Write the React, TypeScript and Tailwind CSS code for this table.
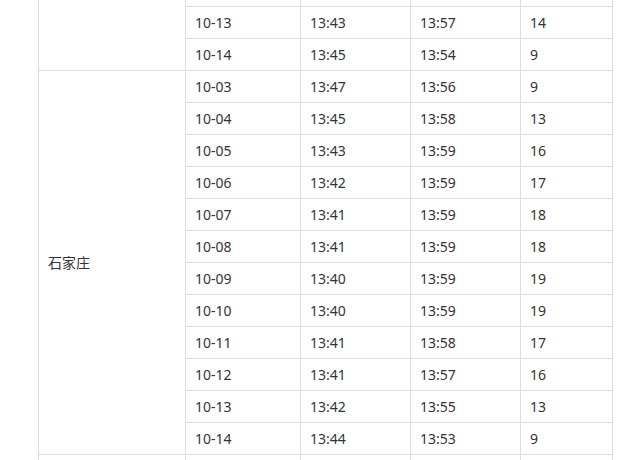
import React from 'react';

type Row = { date: string; rise: string; set: string; mins: string };

// rows cut off at the top and bottom edges show no text in the shot
const blank: Row = { date: '', rise: '', set: '', mins: '' };

const prevRows: Row[] = [
  blank,
  { date: '10-13', rise: '13:43', set: '13:57', mins: '14' },
  { date: '10-14', rise: '13:45', set: '13:54', mins: '9' },
];

const sjzRows: Row[] = [
  { date: '10-03', rise: '13:47', set: '13:56', mins: '9' },
  { date: '10-04', rise: '13:45', set: '13:58', mins: '13' },
  { date: '10-05', rise: '13:43', set: '13:59', mins: '16' },
  { date: '10-06', rise: '13:42', set: '13:59', mins: '17' },
  { date: '10-07', rise: '13:41', set: '13:59', mins: '18' },
  { date: '10-08', rise: '13:41', set: '13:59', mins: '18' },
  { date: '10-09', rise: '13:40', set: '13:59', mins: '19' },
  { date: '10-10', rise: '13:40', set: '13:59', mins: '19' },
  { date: '10-11', rise: '13:41', set: '13:58', mins: '17' },
  { date: '10-12', rise: '13:41', set: '13:57', mins: '16' },
  { date: '10-13', rise: '13:42', set: '13:55', mins: '13' },
  { date: '10-14', rise: '13:44', set: '13:53', mins: '9' },
];

const nextRows: Row[] = [blank];

const td = 'border border-[#dddddd] h-[32px] px-[9px] py-0 align-middle';

const Group = ({ name, rows }: { name: string; rows: Row[] }) => (
  <>
    {rows.map((r, i) => (
      <tr key={i}>
        {i === 0 && (
          <td rowSpan={rows.length} className={td}>
            {name}
          </td>
        )}
        <td className={td}>{r.date}</td>
        <td className={td}>{r.rise}</td>
        <td className={td}>{r.set}</td>
        <td className={td}>{r.mins}</td>
      </tr>
    ))}
  </>
);

export default function App() {
  return (
    <div className="w-[639px] h-[460px] overflow-hidden bg-white">
      <div className="pl-[38px] -mt-[26px]">
        <table
          className="border-collapse text-[14px] text-[#333333] leading-[20px]"
          style={{ fontFamily: '"Noto Sans", "Noto Sans CJK SC", sans-serif' }}
        >
          <colgroup>
            <col className="w-[147px]" />
            <col className="w-[115px]" />
            <col className="w-[110px]" />
            <col className="w-[110px]" />
            <col className="w-[92px]" />
          </colgroup>
          <tbody>
            <Group name="" rows={prevRows} />
            <Group name="石家庄" rows={sjzRows} />
            <Group name="" rows={nextRows} />
          </tbody>
        </table>
      </div>
    </div>
  );
}
